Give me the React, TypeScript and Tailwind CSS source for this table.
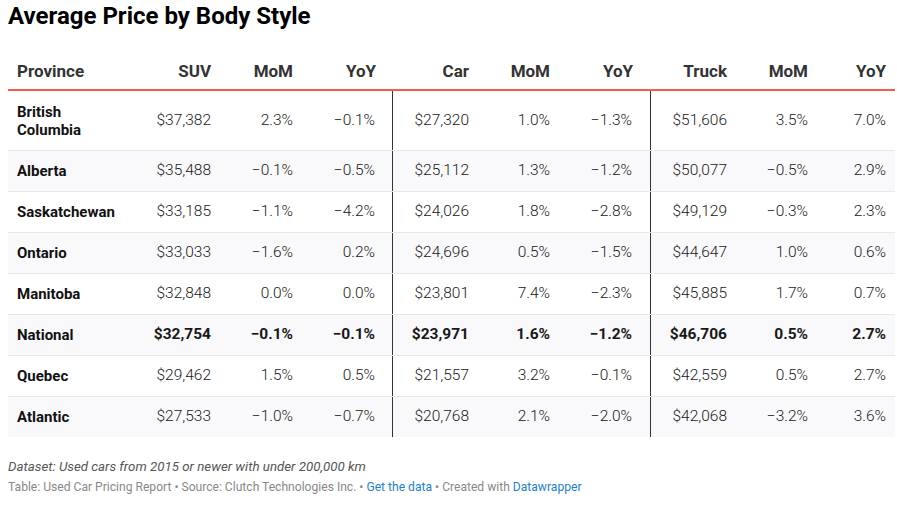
const cols = [
  "w-[122px] pl-[9px] text-left",
  "w-[89px] pr-[8px] text-right",
  "w-[82px] pr-[8px] text-right",
  "w-[92px] pr-[17px] text-right border-r border-[#333333]",
  "w-[84px] pr-[8px] text-right",
  "w-[81px] pr-[8px] text-right",
  "w-[93px] pr-[18px] text-right border-r border-[#333333]",
  "w-[84px] pr-[8px] text-right",
  "w-[81px] pr-[8px] text-right",
  "w-[79px] pr-[9px] text-right",
];

const headCols = [
  "w-[122px] pl-[9px] text-left",
  "w-[89px] pr-[8px] text-right",
  "w-[82px] pr-[8px] text-right",
  "w-[92px] pr-[17px] text-right",
  "w-[84px] pr-[8px] text-right",
  "w-[81px] pr-[8px] text-right",
  "w-[93px] pr-[18px] text-right",
  "w-[84px] pr-[8px] text-right",
  "w-[81px] pr-[8px] text-right",
  "w-[79px] pr-[9px] text-right",
];

const headers = ["Province", "SUV", "MoM", "YoY", "Car", "MoM", "YoY", "Truck", "MoM", "YoY"];

const rows: string[][] = [
  ["British Columbia", "$37,382", "2.3%", "−0.1%", "$27,320", "1.0%", "−1.3%", "$51,606", "3.5%", "7.0%"],
  ["Alberta", "$35,488", "−0.1%", "−0.5%", "$25,112", "1.3%", "−1.2%", "$50,077", "−0.5%", "2.9%"],
  ["Saskatchewan", "$33,185", "−1.1%", "−4.2%", "$24,026", "1.8%", "−2.8%", "$49,129", "−0.3%", "2.3%"],
  ["Ontario", "$33,033", "−1.6%", "0.2%", "$24,696", "0.5%", "−1.5%", "$44,647", "1.0%", "0.6%"],
  ["Manitoba", "$32,848", "0.0%", "0.0%", "$23,801", "7.4%", "−2.3%", "$45,885", "1.7%", "0.7%"],
  ["National", "$32,754", "−0.1%", "−0.1%", "$23,971", "1.6%", "−1.2%", "$46,706", "0.5%", "2.7%"],
  ["Quebec", "$29,462", "1.5%", "0.5%", "$21,557", "3.2%", "−0.1%", "$42,559", "0.5%", "2.7%"],
  ["Atlantic", "$27,533", "−1.0%", "−0.7%", "$20,768", "2.1%", "−2.0%", "$42,068", "−3.2%", "3.6%"],
];

export default function App() {
  return (
    <div className="w-[897px] h-[506px] bg-white px-[8px] font-['Roboto',sans-serif] text-[#181818]">
      <h1 className="pt-[1px] text-[24px] leading-[30px] font-bold text-black">Average Price by Body Style</h1>

      <div className="mt-[21px] w-[887px]">
        {/* header */}
        <div className="flex h-[39px] items-center pt-[2px] border-b-2 border-[#f85a49] text-[17px] font-bold text-[#333333]">
          {headers.map((h, i) => (
            <div key={i} className={headCols[i]}>
              {h}
            </div>
          ))}
        </div>

        {/* body */}
        {rows.map((r, ri) => {
          const shaded = ri % 2 === 1;
          const bold = r[0] === "National";
          const tall = ri === 0;
          return (
            <div
              key={ri}
              className={`flex ${tall ? "h-[59px]" : "h-[41px]"} ${ri > 0 ? "border-t border-[#e8e8ec]" : ""} ${shaded ? "bg-[#f9f9fb]" : "bg-white"}`}
            >
              {r.map((c, ci) => (
                <div
                  key={ci}
                  className={`${cols[ci]} flex items-center ${ci === 0 ? "justify-start text-[15px] font-bold leading-[18px] text-[#111111]" : "justify-end text-[15.5px]"} ${ci > 0 && bold ? "font-bold" : ci > 0 ? "font-light" : ""}`}
                >
                  {ci === 0 && tall ? (
                    <span>
                      British
                      <br />
                      Columbia
                    </span>
                  ) : (
                    c
                  )}
                </div>
              ))}
            </div>
          );
        })}
      </div>

      <div className="mt-[21px]">
        <p className="italic text-[13.3px] leading-[18px] text-[#555555]">Dataset: Used cars from 2015 or newer with under 200,000 km</p>
        <p className="mt-[3px] text-[12.1px] leading-[17px] text-[#888888]">
          Table: Used Car Pricing Report • Source: Clutch Technologies Inc. •{" "}
          <span className="text-[#1d7fcf]">Get the data</span> • Created with{" "}
          <span className="text-[#1d7fcf]">Datawrapper</span>
        </p>
      </div>
    </div>
  );
}
